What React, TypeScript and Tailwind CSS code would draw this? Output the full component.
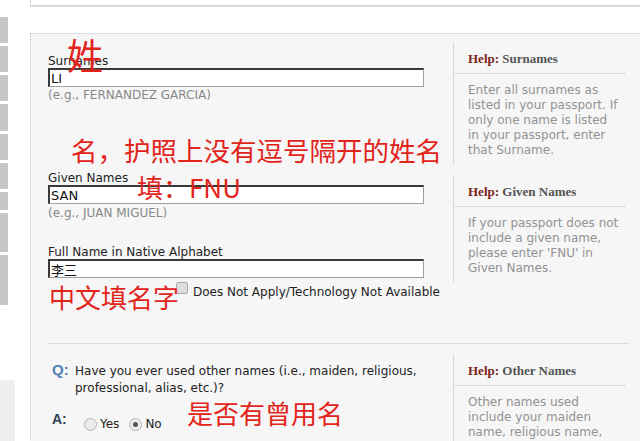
import type { ReactNode } from "react";

const stripBlocks = [26, 26, 26, 27, 26, 26, 18, 39, 50];

function HelpBox({ title, lines, className }: { title: string; lines: string[]; className?: string }) {
  return (
    <div className={`w-[172px] shrink-0 border-l border-[#d6d6d6] ${className ?? ""}`}>
      <div className="border-b border-dotted border-[#c4c4c4] pb-[6px] pl-[14px] pt-[9px] font-['Liberation_Serif',serif] text-[13px] font-bold leading-[16px] text-[#555]">
        <span className="text-[#7a2416]">Help:</span> {title}
      </div>
      <div className="pb-[6px] pl-[14px] pt-[9px] text-[12px] leading-[15px] text-[#929292]">
        {lines.map((l) => (
          <div key={l} className="whitespace-nowrap">
            {l}
          </div>
        ))}
      </div>
    </div>
  );
}

function Field({ label, value }: { label: string; value: string }) {
  return (
    <div>
      <div className="text-[12px] leading-[13px] text-[#222]">{label}</div>
      <input
        readOnly
        value={value}
        className="block h-[19px] w-[376px] border-b border-l-2 border-r border-t-2 border-b-[#a0a0a0] border-l-[#3a3a3a] border-r-[#a0a0a0] border-t-[#3a3a3a] bg-white px-[1px] text-[13px] leading-none text-[#111] outline-none"
      />
    </div>
  );
}

function Note({ children, className }: { children: ReactNode; className: string }) {
  return (
    <div
      className={`pointer-events-none absolute whitespace-nowrap font-['Noto_Sans_CJK_SC',sans-serif] leading-none text-[#e2241b] ${className}`}
    >
      {children}
    </div>
  );
}

function Radio({ checked }: { checked?: boolean }) {
  return (
    <span className="flex h-[13px] w-[13px] items-center justify-center rounded-full border border-[#b4b4b4] bg-[#ececec]">
      {checked ? <span className="h-[5px] w-[5px] rounded-full bg-[#555]" /> : null}
    </span>
  );
}

export default function App() {
  return (
    <div className="flex h-[441px] w-[640px] overflow-hidden bg-white font-['DejaVu_Sans','Noto_Sans_CJK_SC',sans-serif]">
      {/* left nav stub */}
      <div className="flex w-[30px] shrink-0 flex-col pt-[17px]">
        <div className="flex flex-col gap-[3px]">
          {stripBlocks.map((h, i) => (
            <div key={i} className="w-[8px] shrink-0 bg-[#c6c6c6]" style={{ height: h }} />
          ))}
        </div>
        <div className="mt-[75px] h-[61px] w-[15px] shrink-0 bg-[#efefef]" />
      </div>

      <div className="flex min-w-0 flex-1 flex-col">
        <div className="h-[7px] shrink-0 border-b-2 border-l border-[#d8d8d8] bg-white" />

        <div className="relative mt-[26px] flex-1 border-l border-t border-dotted border-[#c4c4c4] bg-[#f6f6f6]">
          {/* surnames */}
          <div className="flex h-[138px]">
            <div className="w-[422px] shrink-0 pl-[17px] pt-[21px]">
              <Field label="Surnames" value="LI" />
              <div className="mt-[1px] text-[12px] leading-[14px] text-[#888]">(e.g., FERNANDEZ GARCIA)</div>
            </div>
            <HelpBox
              className="mt-[8px] self-start"
              title="Surnames"
              lines={[
                "Enter all surnames as",
                "listed in your passport. If",
                "only one name is listed",
                "in your passport, enter",
                "that Surname.",
              ]}
            />
          </div>

          {/* given names + native */}
          <div className="flex h-[171px]">
            <div className="w-[422px] shrink-0 pl-[17px]">
              <Field label="Given Names" value="SAN" />
              <div className="mt-[2px] text-[12px] leading-[14px] text-[#888]">(e.g., JUAN MIGUEL)</div>
              <div className="mt-[26px]">
                <Field label="Full Name in Native Alphabet" value="李三" />
              </div>
              <div className="mt-[4px] flex items-start gap-[5px] pl-[128px]">
                <span className="h-[12px] w-[12px] rounded-[2px] border border-[#aaa] bg-[#dedede]" />
                <span className="mt-[3px] text-[12px] leading-[14px] text-[#222]">
                  Does Not Apply/Technology Not Available
                </span>
              </div>
            </div>
            <HelpBox
              className="mt-[3px] self-start"
              title="Given Names"
              lines={["If your passport does not", "include a given name,", "please enter 'FNU' in", "Given Names."]}
            />
          </div>

          <div className="ml-[17px] mr-[11px] border-t border-dotted border-[#c4c4c4]" />

          {/* other names */}
          <div className="flex">
            <div className="w-[422px] shrink-0 pl-[21px] pt-[17px]">
              <div className="flex items-baseline">
                <span className="w-[23px] shrink-0 font-['Liberation_Sans',sans-serif] text-[15px] font-bold leading-[17px] text-[#4f7fb8]">
                  Q:
                </span>
                <p className="text-[12px] leading-[17px] text-[#222]">
                  Have you ever used other names (i.e., maiden, religious,
                  <br />
                  professional, alias, etc.)?
                </p>
              </div>
              <div className="mt-[14px] flex items-start">
                <span className="w-[32px] shrink-0 font-['Liberation_Sans',sans-serif] text-[14px] font-bold leading-[16px] text-[#2f3d55]">
                  A:
                </span>
                <div className="mt-[5px] flex items-center text-[12px] leading-[16px] text-[#222]">
                  <Radio />
                  <span className="ml-[3px]">Yes</span>
                  <span className="ml-[10px]">
                    <Radio checked />
                  </span>
                  <span className="ml-[3px]">No</span>
                </div>
              </div>
            </div>
            <HelpBox
              className="mt-[10px] h-[200px]"
              title="Other Names"
              lines={["Other names used", "include your maiden", "name, religious name,", "professional name, or"]}
            />
          </div>

          {/* red annotations drawn over the form */}
          <Note className="left-[36px] top-[2px] text-[36px]">姓</Note>
          <Note className="left-[40px] top-[103px] text-[26.5px]">名，护照上没有逗号隔开的姓名</Note>
          <Note className="left-[106px] top-[140px] text-[26px]">填：FNU</Note>
          <Note className="left-[18px] top-[250px] text-[26px]">中文填名字</Note>
          <Note className="left-[156px] top-[366px] text-[26px]">是否有曾用名</Note>
        </div>
      </div>
    </div>
  );
}
